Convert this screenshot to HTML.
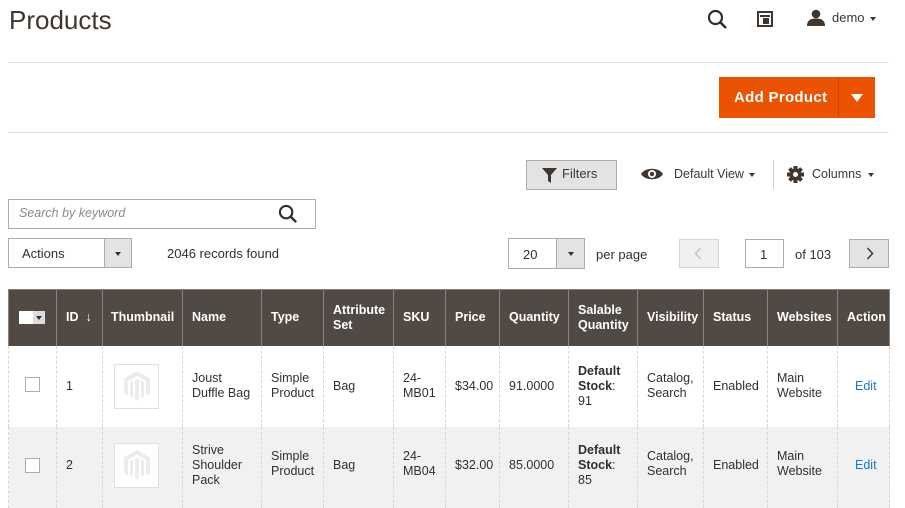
<!DOCTYPE html>
<html><head><meta charset="utf-8"><style>
*{box-sizing:border-box;margin:0;padding:0}
body{width:905px;height:469px;overflow:hidden;background:#fff;font-family:"Liberation Sans",sans-serif;color:#303030;position:relative;font-size:13px}
.a{position:absolute}
.hr{position:absolute;left:8px;width:881px;height:1px;background:#e3e3e3}
table{position:absolute;left:8px;top:289px;border-collapse:collapse;table-layout:fixed;width:881px}
th{background:#514943;color:#fff;font-weight:bold;font-size:12.5px;text-align:left;padding:0 9px;height:56px;border-left:1px solid #8a837f;border-right:1px solid #8a837f;border-top:1px solid #8a837f;line-height:15px;vertical-align:middle}
td{font-size:12.5px;padding:0 9px;line-height:15px;border-left:1px dashed #d6d6d6;border-right:1px dashed #d6d6d6;vertical-align:middle;color:#303030}
tr.r1 td{height:81px}
tr.r2 td{height:81px;background:#f0f1f0;vertical-align:top;padding-top:16px}
.cb{display:inline-block;width:15px;height:15px;border:1px solid #adadad;background:#fff}
.thumb{width:45px;height:45px;border:1px solid #e0e0e0;margin-left:2px;display:flex;align-items:center;justify-content:center;background:#fff}
.btn{border:1px solid #adadad;background:#e3e3e3}
</style></head><body>
<div class="a" style="left:9px;top:5px;font-size:26px;color:#41362f">Products</div>
<svg class="a" style="left:707px;top:9px" width="22" height="22" viewBox="0 0 22 22"><circle cx="8.5" cy="8.5" r="6.5" fill="none" stroke="#303030" stroke-width="2.2"/><line x1="13.5" y1="13.5" x2="19" y2="19" stroke="#303030" stroke-width="2.6"/></svg>
<svg class="a" style="left:757px;top:11px" width="16" height="16" viewBox="0 0 16 16"><rect x="1" y="1" width="14" height="14" fill="none" stroke="#41362f" stroke-width="2"/><rect x="3" y="4" width="10" height="2" fill="#41362f"/><rect x="6" y="7" width="6" height="6" fill="#41362f"/></svg>
<svg class="a" style="left:807px;top:9px" width="18" height="17" viewBox="0 0 18 17"><circle cx="9" cy="5" r="4.3" fill="#41362f"/><path d="M0 17 C0 11 4 9.5 9 9.5 C14 9.5 18 11 18 17Z" fill="#41362f"/></svg>
<div class="a" style="left:832px;top:10px;font-size:13px;color:#41362f">demo</div>
<div class="a" style="left:870px;top:17px;border:3.5px solid transparent;border-top:4px solid #41362f"></div>
<div class="hr" style="top:62px"></div>
<div class="a" style="left:719px;top:77px;width:156px;height:41px;background:#eb5202"></div>
<div class="a" style="left:838px;top:77px;width:1px;height:41px;background:#c9440a"></div>
<div class="a" style="left:734px;top:89px;color:#fff;font-weight:bold;font-size:15px;letter-spacing:.3px">Add Product</div>
<div class="a" style="left:851px;top:94px;border:6px solid transparent;border-top:8px solid #fff;border-bottom:0"></div>
<div class="hr" style="top:132px"></div>
<div class="a btn" style="left:526px;top:160px;width:91px;height:30px"></div>
<svg class="a" style="left:542px;top:168px" width="15" height="15" viewBox="0 0 15 15"><path d="M0 0H15L9 7V15L6 13V7Z" fill="#41362f"/></svg>
<div class="a" style="left:562px;top:166px;font-size:13px;color:#41362f">Filters</div>
<svg class="a" style="left:641px;top:167px" width="22" height="14" viewBox="0 0 22 14"><path d="M0 7C4 0 18 0 22 7C18 14 4 14 0 7Z" fill="#41362f"/><circle cx="11" cy="7" r="4" fill="#fff"/><circle cx="11" cy="7" r="2.2" fill="#41362f"/></svg>
<div class="a" style="left:674px;top:167px;font-size:12.5px;color:#41362f">Default View</div>
<div class="a" style="left:749px;top:173px;border:3.5px solid transparent;border-top:4px solid #41362f"></div>
<div class="a" style="left:773px;top:160px;width:1px;height:29px;background:#ccc"></div>
<svg class="a" style="left:787px;top:166px" width="17" height="17" viewBox="-8.5 -8.5 17 17"><g fill="#41362f"><circle r="6"/><rect x="-2" y="-8.5" width="4" height="17"/><rect x="-2" y="-8.5" width="4" height="17" transform="rotate(45)"/><rect x="-2" y="-8.5" width="4" height="17" transform="rotate(90)"/><rect x="-2" y="-8.5" width="4" height="17" transform="rotate(135)"/></g><circle r="2.5" fill="#fff"/></svg>
<div class="a" style="left:812px;top:167px;font-size:12.5px;color:#41362f">Columns</div>
<div class="a" style="left:868px;top:173px;border:3.5px solid transparent;border-top:4px solid #41362f"></div>
<div class="a" style="left:8px;top:199px;width:308px;height:30px;border:1px solid #adadad"></div>
<div class="a" style="left:19px;top:206px;font-style:italic;font-size:12.5px;color:#8a8a8a">Search by keyword</div>
<svg class="a" style="left:278px;top:204px" width="21" height="21" viewBox="0 0 22 22"><circle cx="8.5" cy="8.5" r="6.5" fill="none" stroke="#303030" stroke-width="2.2"/><line x1="13.5" y1="13.5" x2="19" y2="19" stroke="#303030" stroke-width="2.6"/></svg>
<div class="a" style="left:8px;top:238px;width:124px;height:30px;border:1px solid #adadad"></div>
<div class="a btn" style="left:104px;top:238px;width:28px;height:30px"></div>
<div class="a" style="left:115px;top:252px;border:3px solid transparent;border-top:4px solid #303030"></div>
<div class="a" style="left:22px;top:246px;font-size:13px">Actions</div>
<div class="a" style="left:167px;top:246px;font-size:13px">2046 records found</div>
<div class="a" style="left:508px;top:238px;width:77px;height:31px;border:1px solid #adadad"></div>
<div class="a btn" style="left:556px;top:238px;width:29px;height:31px"></div>
<div class="a" style="left:568px;top:252px;border:3px solid transparent;border-top:4px solid #303030"></div>
<div class="a" style="left:523px;top:247px;font-size:13px">20</div>
<div class="a" style="left:596px;top:247px;font-size:13px">per page</div>
<div class="a" style="left:679px;top:239px;width:40px;height:29px;border:1px solid #d6d6d6;background:#f0f0f0"></div>
<svg class="a" style="left:694px;top:247px" width="8" height="13" viewBox="0 0 8 13"><path d="M6.5 1L1.5 6.5L6.5 12" fill="none" stroke="#c2c2c2" stroke-width="1.5"/></svg>
<div class="a" style="left:745px;top:239px;width:39px;height:29px;border:1px solid #adadad"></div>
<div class="a" style="left:760px;top:247px;font-size:13px">1</div>
<div class="a" style="left:795px;top:247px;font-size:13px">of 103</div>
<div class="a btn" style="left:849px;top:239px;width:40px;height:29px"></div>
<svg class="a" style="left:866px;top:247px" width="8" height="13" viewBox="0 0 8 13"><path d="M1.5 1L6.5 6.5L1.5 12" fill="none" stroke="#41362f" stroke-width="1.5"/></svg>
<table>
<colgroup><col style="width:48px"><col style="width:46px"><col style="width:80px"><col style="width:79px"><col style="width:62px"><col style="width:70px"><col style="width:52px"><col style="width:54px"><col style="width:69px"><col style="width:69px"><col style="width:66px"><col style="width:64px"><col style="width:70px"><col style="width:52px"></colgroup>
<tr><th><span style="display:inline-block;width:26px;height:13px;background:#fff;position:relative;vertical-align:middle;margin-left:1px"><span style="position:absolute;right:0;top:0;width:12px;height:13px;background:#ddd"></span><span style="position:absolute;right:3px;top:5px;border:3px solid transparent;border-top:4px solid #303030"></span></span></th><th>ID &nbsp;<span style="font-weight:normal">&#8595;</span></th><th style="padding-left:8px">Thumbnail</th><th>Name</th><th>Type</th><th>Attribute Set</th><th>SKU</th><th>Price</th><th>Quantity</th><th>Salable Quantity</th><th>Visibility</th><th>Status</th><th>Websites</th><th>Action</th></tr>
<tr class="r1"><td style="padding-left:16px"><span class="cb"></span></td><td>1</td><td><div class="thumb"><svg width="26" height="30" viewBox="0 0 26 30"><path d="M13 0L26 7.5V22.5L22 25V10L13 4.8L4 10V25L0 22.5V7.5Z M11 9L13 7.8L15 9V28L13 30L11 28Z M6 11L9 9.3V27L6 25Z M17 9.3L20 11V25L17 27Z" fill="#ececec"/></svg></div></td><td>Joust Duffle Bag</td><td>Simple Product</td><td>Bag</td><td>24-MB01</td><td>$34.00</td><td>91.0000</td><td><b>Default Stock</b>: 91</td><td>Catalog, Search</td><td>Enabled</td><td>Main Website</td><td style="color:#1979c3;padding-left:17px">Edit</td></tr>
<tr class="r2"><td style="padding-left:16px;padding-top:31px"><span class="cb"></span></td><td style="padding-top:31px">2</td><td><div class="thumb"><svg width="26" height="30" viewBox="0 0 26 30"><path d="M13 0L26 7.5V22.5L22 25V10L13 4.8L4 10V25L0 22.5V7.5Z M11 9L13 7.8L15 9V28L13 30L11 28Z M6 11L9 9.3V27L6 25Z M17 9.3L20 11V25L17 27Z" fill="#ececec"/></svg></div></td><td>Strive Shoulder Pack</td><td style="padding-top:22px">Simple Product</td><td style="padding-top:31px">Bag</td><td style="padding-top:22px">24-MB04</td><td style="padding-top:31px">$32.00</td><td style="padding-top:31px">85.0000</td><td><b>Default Stock</b>: 85</td><td style="padding-top:22px">Catalog, Search</td><td style="padding-top:31px">Enabled</td><td style="padding-top:22px">Main Website</td><td style="color:#1979c3;padding-left:17px;padding-top:31px">Edit</td></tr>
</table>
</body></html>
